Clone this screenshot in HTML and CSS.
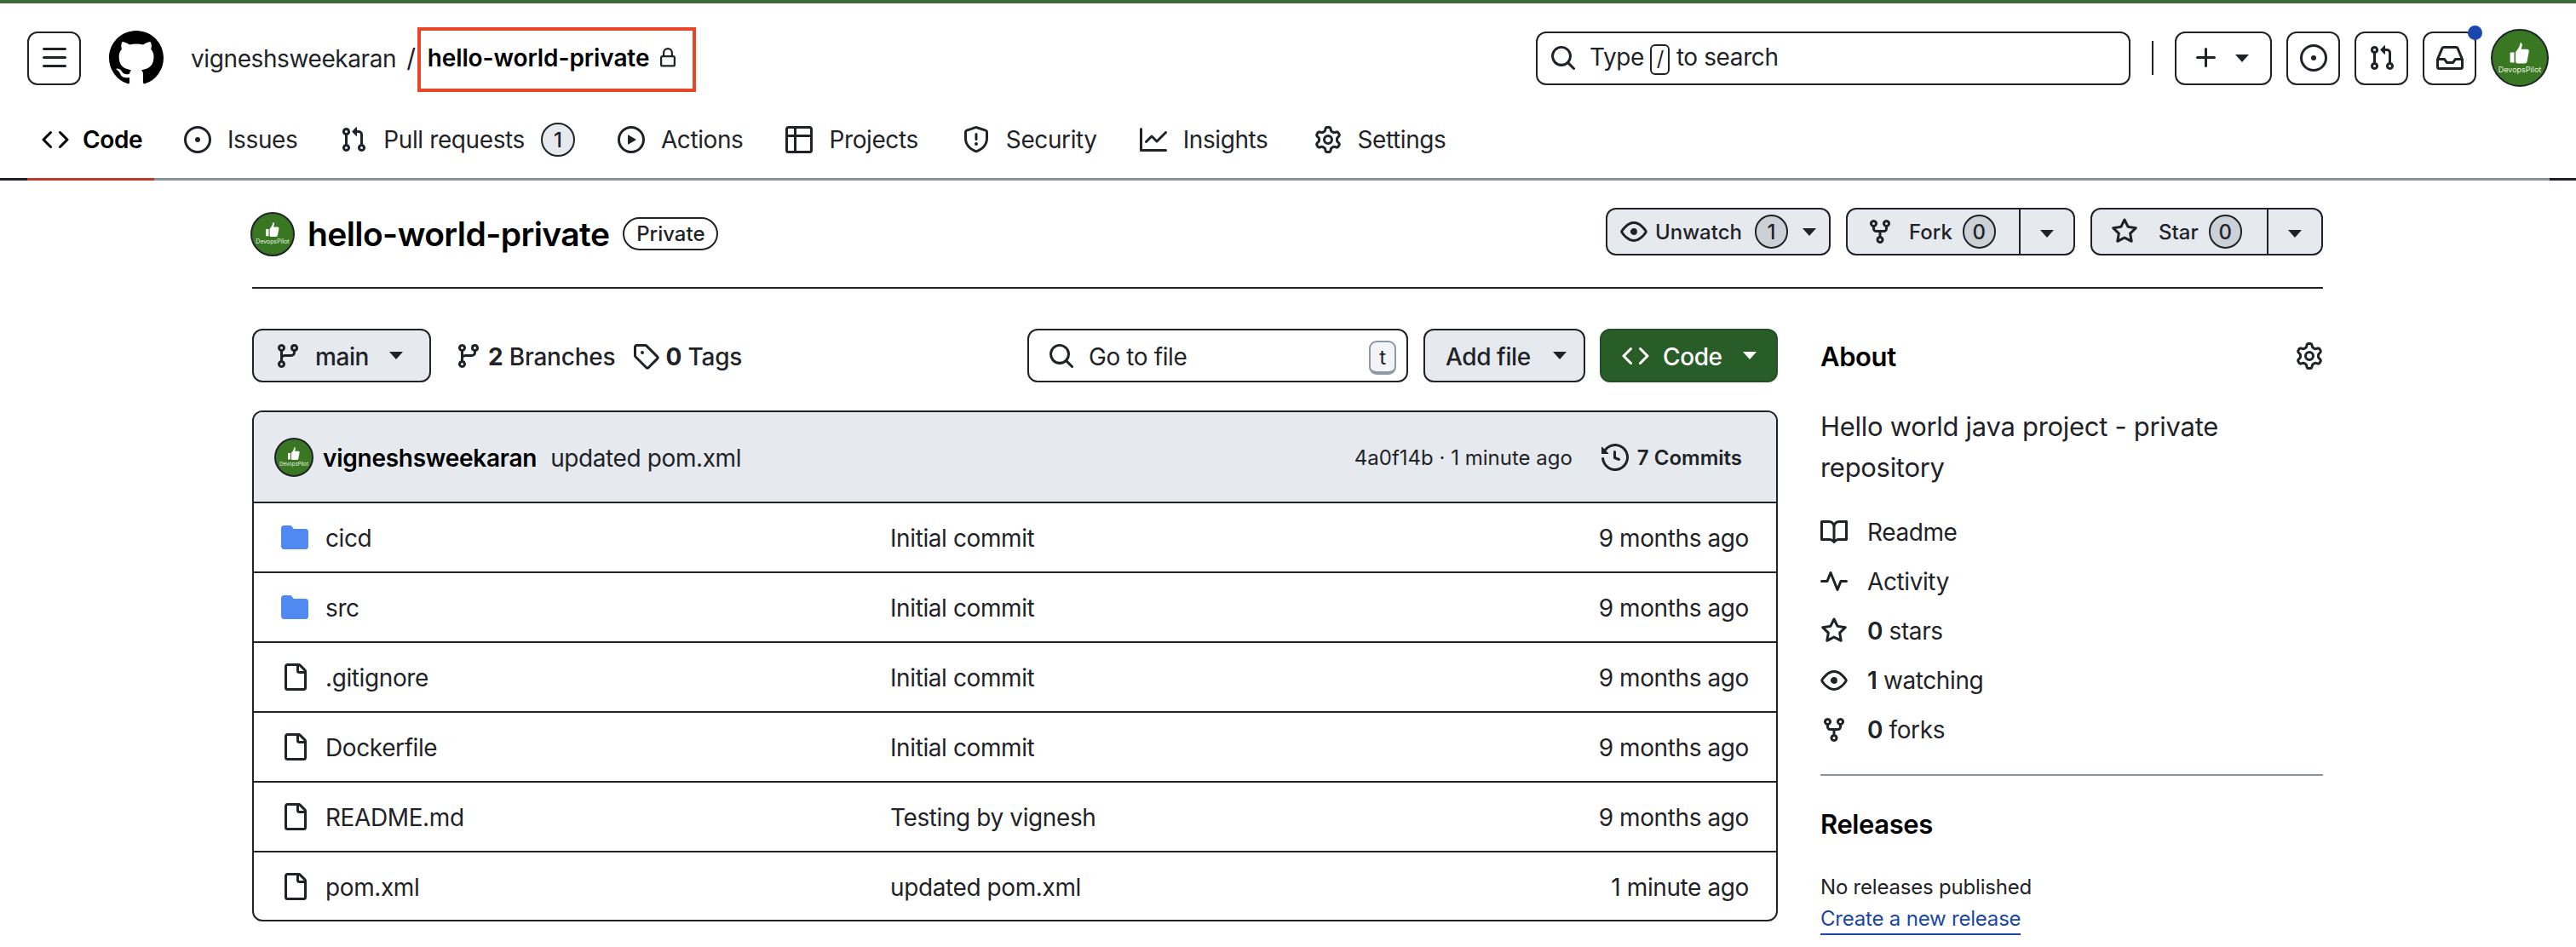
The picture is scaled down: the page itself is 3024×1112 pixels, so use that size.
FILE: index.html
```html
<!DOCTYPE html>
<html lang="en">
<head>
<meta charset="utf-8">
<title>hello-world-private</title>
<link rel="stylesheet" href="styles.css">
</head>
<body>
<svg class="sprite" xmlns="http://www.w3.org/2000/svg">
<symbol id="i-bars" viewBox="0 0 16 16"><path d="M1 2.75A.75.75 0 0 1 1.75 2h12.5a.75.75 0 0 1 0 1.5H1.75A.75.75 0 0 1 1 2.75Zm0 5A.75.75 0 0 1 1.75 7h12.5a.75.75 0 0 1 0 1.5H1.75A.75.75 0 0 1 1 7.75ZM1.75 12h12.5a.75.75 0 0 1 0 1.5H1.75a.75.75 0 0 1 0-1.5Z"/></symbol>
<symbol id="i-github" viewBox="0 0 16 16"><path d="M8 0c4.42 0 8 3.58 8 8a8.013 8.013 0 0 1-5.45 7.59c-.4.08-.55-.17-.55-.38 0-.27.01-1.13.01-2.2 0-.75-.25-1.23-.54-1.48 1.78-.2 3.65-.88 3.65-3.95 0-.88-.31-1.59-.82-2.15.08-.2.36-1.02-.08-2.12 0 0-.67-.22-2.2.82-.64-.18-1.32-.27-2-.27-.68 0-1.36.09-2 .27-1.53-1.03-2.2-.82-2.2-.82-.44 1.1-.16 1.92-.08 2.12-.51.56-.82 1.28-.82 2.15 0 3.06 1.86 3.75 3.64 3.95-.23.2-.44.55-.51 1.07-.46.21-1.61.55-2.33-.66-.15-.24-.6-.83-1.23-.82-.67.01-.27.38.01.53.34.19.73.9.82 1.13.16.45.68 1.31 2.69.94 0 .67.01 1.3.01 1.49 0 .21-.15.45-.55.38A7.995 7.995 0 0 1 0 8c0-4.42 3.58-8 8-8Z"/></symbol>
<symbol id="i-lock" viewBox="0 0 16 16"><path d="M4 4a4 4 0 0 1 8 0v2h.25c.966 0 1.75.784 1.75 1.75v5.5A1.75 1.75 0 0 1 12.25 15h-8.5A1.75 1.75 0 0 1 2 13.25v-5.5C2 6.784 2.784 6 3.75 6H4Zm8.25 3.5h-8.5a.25.25 0 0 0-.25.25v5.5c0 .138.112.25.25.25h8.5a.25.25 0 0 0 .25-.25v-5.5a.25.25 0 0 0-.25-.25ZM10.5 6V4a2.5 2.5 0 1 0-5 0v2Z"/></symbol>
<symbol id="i-code" viewBox="0 0 16 16"><path d="m11.28 3.22 4.25 4.25a.75.75 0 0 1 0 1.06l-4.25 4.25a.749.749 0 0 1-1.275-.326.749.749 0 0 1 .215-.734L13.94 8l-3.72-3.72a.749.749 0 0 1 .326-1.275.749.749 0 0 1 .734.215Zm-6.56 0a.751.751 0 0 1 1.042.018.751.751 0 0 1 .018 1.042L2.06 8l3.72 3.72a.749.749 0 0 1-.326 1.275.749.749 0 0 1-.734-.215L.47 8.53a.75.75 0 0 1 0-1.06Z"/></symbol>
<symbol id="i-issue" viewBox="0 0 16 16"><path d="M8 9.5a1.5 1.5 0 1 0 0-3 1.5 1.5 0 0 0 0 3Z"/><path d="M8 0a8 8 0 1 1 0 16A8 8 0 0 1 8 0ZM1.5 8a6.5 6.5 0 1 0 13 0 6.5 6.5 0 0 0-13 0Z"/></symbol>
<symbol id="i-pr" viewBox="0 0 16 16"><path d="M1.5 3.25a2.25 2.25 0 1 1 3 2.122v5.256a2.251 2.251 0 1 1-1.5 0V5.372A2.25 2.25 0 0 1 1.5 3.25Zm5.677-.177L9.573.677A.25.25 0 0 1 10 .854V2.5h1A2.5 2.5 0 0 1 13.5 5v5.628a2.251 2.251 0 1 1-1.5 0V5a1 1 0 0 0-1-1h-1v1.646a.25.25 0 0 1-.427.177L7.177 3.427a.25.25 0 0 1 0-.354ZM3.75 2.5a.75.75 0 1 0 0 1.5.75.75 0 0 0 0-1.5Zm0 9.5a.75.75 0 1 0 0 1.5.75.75 0 0 0 0-1.5Zm8.25.75a.75.75 0 1 0 1.5 0 .75.75 0 0 0-1.5 0Z"/></symbol>
<symbol id="i-play" viewBox="0 0 16 16"><path d="M8 0a8 8 0 1 1 0 16A8 8 0 0 1 8 0ZM1.5 8a6.5 6.5 0 1 0 13 0 6.5 6.5 0 0 0-13 0Zm4.879-2.773 4.264 2.559a.25.25 0 0 1 0 .428l-4.264 2.559A.25.25 0 0 1 6 10.559V5.442a.25.25 0 0 1 .379-.215Z"/></symbol>
<symbol id="i-table" viewBox="0 0 16 16"><path d="M0 1.75C0 .784.784 0 1.75 0h12.5C15.216 0 16 .784 16 1.75v12.5A1.75 1.75 0 0 1 14.25 16H1.75A1.75 1.75 0 0 1 0 14.25ZM6.5 6.5v8h7.75a.25.25 0 0 0 .25-.25V6.5Zm8-1.5V1.75a.25.25 0 0 0-.25-.25H6.5V5Zm-13 1.5v7.75c0 .138.112.25.25.25H5v-8ZM5 5V1.5H1.75a.25.25 0 0 0-.25.25V5Z"/></symbol>
<symbol id="i-shield" viewBox="0 0 16 16"><path d="M7.467.133a1.748 1.748 0 0 1 1.066 0l5.25 1.68A1.75 1.75 0 0 1 15 3.48V7c0 1.566-.32 3.182-1.303 4.682-.983 1.498-2.585 2.813-5.032 3.855a1.697 1.697 0 0 1-1.33 0c-2.447-1.042-4.049-2.357-5.032-3.855C1.32 10.182 1 8.566 1 7V3.48a1.75 1.75 0 0 1 1.217-1.667Zm.61 1.429a.25.25 0 0 0-.153 0l-5.25 1.68a.25.25 0 0 0-.174.238V7c0 1.358.275 2.666 1.057 3.86.784 1.194 2.121 2.34 4.366 3.297a.196.196 0 0 0 .154 0c2.245-.956 3.582-2.104 4.366-3.298C13.225 9.666 13.5 8.36 13.5 7V3.48a.251.251 0 0 0-.174-.237l-5.25-1.68ZM8.75 4.75v3a.75.75 0 0 1-1.5 0v-3a.75.75 0 0 1 1.5 0ZM9 10.5a1 1 0 1 1-2 0 1 1 0 0 1 2 0Z"/></symbol>
<symbol id="i-graph" viewBox="0 0 16 16"><path d="M1.5 1.75V13.5h13.75a.75.75 0 0 1 0 1.5H.75a.75.75 0 0 1-.75-.75V1.75a.75.75 0 0 1 1.5 0Zm14.28 2.53-5.25 5.25a.75.75 0 0 1-1.06 0L7 7.06 4.28 9.78a.751.751 0 0 1-1.042-.018.751.751 0 0 1-.018-1.042l3.25-3.25a.75.75 0 0 1 1.06 0L10 7.94l4.72-4.72a.751.751 0 0 1 1.042.018.751.751 0 0 1 .018 1.042Z"/></symbol>
<symbol id="i-gear" viewBox="0 0 16 16"><path d="M8 0a8.2 8.2 0 0 1 .701.031C9.444.095 9.99.645 10.16 1.29l.288 1.107c.018.066.079.158.212.224.231.114.454.243.668.386.123.082.233.09.299.071l1.103-.303c.644-.176 1.392.021 1.82.63.27.385.506.792.704 1.218.315.675.111 1.422-.364 1.891l-.814.806c-.049.048-.098.147-.088.294.016.257.016.515 0 .772-.01.147.038.246.088.294l.814.806c.475.469.679 1.216.364 1.891a7.977 7.977 0 0 1-.704 1.217c-.428.61-1.176.807-1.82.63l-1.102-.302c-.067-.019-.177-.011-.3.071a5.909 5.909 0 0 1-.668.386c-.133.066-.194.158-.211.224l-.29 1.106c-.168.646-.715 1.196-1.458 1.26a8.006 8.006 0 0 1-1.402 0c-.743-.064-1.289-.614-1.458-1.26l-.289-1.106c-.018-.066-.079-.158-.212-.224a5.738 5.738 0 0 1-.668-.386c-.123-.082-.233-.09-.299-.071l-1.103.303c-.644.176-1.392-.021-1.82-.63a8.12 8.12 0 0 1-.704-1.218c-.315-.675-.111-1.422.363-1.891l.815-.806c.05-.048.098-.147.088-.294a6.214 6.214 0 0 1 0-.772c.01-.147-.038-.246-.088-.294l-.815-.806C.635 6.045.431 5.298.746 4.623a7.92 7.92 0 0 1 .704-1.217c.428-.61 1.176-.807 1.82-.63l1.102.302c.067.019.177.011.3-.071.214-.143.437-.272.668-.386.133-.066.194-.158.211-.224l.29-1.106C6.009.645 6.556.095 7.299.03 7.53.01 7.764 0 8 0Zm-.571 1.525c-.036.003-.108.036-.137.146l-.289 1.105c-.147.561-.549.967-.998 1.189-.173.086-.34.183-.5.29-.417.278-.97.423-1.529.27l-1.103-.303c-.109-.03-.175.016-.195.045-.22.312-.412.644-.573.99-.014.031-.021.11.059.19l.815.806c.411.406.562.957.53 1.456a4.709 4.709 0 0 0 0 .582c.032.499-.119 1.05-.53 1.456l-.815.806c-.081.08-.073.159-.059.19.162.346.353.677.573.989.02.03.085.076.195.046l1.102-.303c.56-.153 1.113-.008 1.53.27.161.107.328.204.501.29.447.222.85.629.997 1.189l.289 1.105c.029.109.101.143.137.146a6.6 6.6 0 0 0 1.142 0c.036-.003.108-.036.137-.146l.289-1.105c.147-.561.549-.967.998-1.189.173-.086.34-.183.5-.29.417-.278.97-.423 1.529-.27l1.103.303c.109.029.175-.016.195-.045.22-.313.411-.644.573-.99.014-.031.021-.11-.059-.19l-.815-.806c-.411-.406-.562-.957-.53-1.456a4.709 4.709 0 0 0 0-.582c-.032-.499.119-1.05.53-1.456l.815-.806c.081-.08.073-.159.059-.19a6.464 6.464 0 0 0-.573-.989c-.02-.03-.085-.076-.195-.046l-1.102.303c-.56.153-1.113.008-1.53-.27a4.44 4.44 0 0 0-.501-.29c-.447-.222-.85-.629-.997-1.189l-.289-1.105c-.029-.11-.101-.143-.137-.146a6.6 6.6 0 0 0-1.142 0ZM11 8a3 3 0 1 1-6 0 3 3 0 0 1 6 0ZM9.5 8a1.5 1.5 0 1 0-3.001.001A1.5 1.5 0 0 0 9.5 8Z"/></symbol>
<symbol id="i-search" viewBox="0 0 16 16"><path d="M10.68 11.74a6 6 0 0 1-7.922-8.982 6 6 0 0 1 8.982 7.922l3.04 3.04a.749.749 0 0 1-.326 1.275.749.749 0 0 1-.734-.215ZM11.5 7a4.499 4.499 0 1 0-8.997 0A4.499 4.499 0 0 0 11.5 7Z"/></symbol>
<symbol id="i-plus" viewBox="0 0 16 16"><path d="M7.75 2a.75.75 0 0 1 .75.75V7h4.25a.75.75 0 0 1 0 1.5H8.5v4.25a.75.75 0 0 1-1.5 0V8.5H2.75a.75.75 0 0 1 0-1.5H7V2.75A.75.75 0 0 1 7.75 2Z"/></symbol>
<symbol id="i-inbox" viewBox="0 0 16 16"><path d="M2.8 2.06A1.75 1.75 0 0 1 4.41 1h7.18c.7 0 1.333.417 1.61 1.06l2.74 6.395c.04.093.06.194.06.295v4.5A1.75 1.75 0 0 1 14.25 15H1.75A1.75 1.75 0 0 1 0 13.25v-4.5c0-.101.02-.202.06-.295Zm1.61.44a.25.25 0 0 0-.23.152L1.887 8H4.75a.75.75 0 0 1 .6.3L6.625 10h2.75l1.275-1.7a.75.75 0 0 1 .6-.3h2.863L11.82 2.652a.25.25 0 0 0-.23-.152Zm10.09 7h-2.875l-1.275 1.7a.75.75 0 0 1-.6.3h-3.5a.75.75 0 0 1-.6-.3L4.375 9.5H1.5v3.75c0 .138.112.25.25.25h12.5a.25.25 0 0 0 .25-.25Z"/></symbol>
<symbol id="i-eye" viewBox="0 0 16 16"><path d="M8 2c1.981 0 3.671.992 4.933 2.078 1.27 1.091 2.187 2.345 2.637 3.023a1.62 1.62 0 0 1 0 1.798c-.45.678-1.367 1.932-2.637 3.023C11.67 13.008 9.981 14 8 14c-1.981 0-3.671-.992-4.933-2.078C1.797 10.83.88 9.576.43 8.898a1.62 1.62 0 0 1 0-1.798c.45-.677 1.367-1.931 2.637-3.022C4.33 2.992 6.019 2 8 2ZM1.679 7.932a.12.12 0 0 0 0 .136c.411.622 1.241 1.75 2.366 2.717C5.176 11.758 6.527 12.5 8 12.5c1.473 0 2.825-.742 3.955-1.715 1.124-.967 1.954-2.096 2.366-2.717a.12.12 0 0 0 0-.136c-.412-.621-1.242-1.75-2.366-2.717C10.824 4.242 9.473 3.5 8 3.5c-1.473 0-2.825.742-3.955 1.715-1.124.967-1.954 2.096-2.366 2.717ZM8 10a2 2 0 1 1-.001-3.999A2 2 0 0 1 8 10Z"/></symbol>
<symbol id="i-fork" viewBox="0 0 16 16"><path d="M5 5.372v.878c0 .414.336.75.75.75h4.5a.75.75 0 0 0 .75-.75v-.878a2.25 2.25 0 1 1 1.5 0v.878a2.25 2.25 0 0 1-2.25 2.25h-1.5v2.128a2.251 2.251 0 1 1-1.5 0V8.5h-1.5A2.25 2.25 0 0 1 3.5 6.25v-.878a2.25 2.25 0 1 1 1.5 0ZM5 3.25a.75.75 0 1 0-1.5 0 .75.75 0 0 0 1.5 0Zm6.75.75a.75.75 0 1 0 0-1.5.75.75 0 0 0 0 1.5Zm-3 8.75a.75.75 0 1 0-1.5 0 .75.75 0 0 0 1.5 0Z"/></symbol>
<symbol id="i-star" viewBox="0 0 16 16"><path d="M8 .25a.75.75 0 0 1 .673.418l1.882 3.815 4.21.612a.75.75 0 0 1 .416 1.279l-3.046 2.97.719 4.192a.751.751 0 0 1-1.088.791L8 12.347l-3.766 1.98a.75.75 0 0 1-1.088-.79l.72-4.194L.818 6.374a.75.75 0 0 1 .416-1.28l4.21-.611L7.327.668A.75.75 0 0 1 8 .25Zm0 2.445L6.615 5.5a.75.75 0 0 1-.564.41l-3.097.45 2.24 2.184a.75.75 0 0 1 .216.664l-.528 3.084 2.769-1.456a.75.75 0 0 1 .698 0l2.77 1.456-.53-3.084a.75.75 0 0 1 .216-.664l2.24-2.183-3.096-.45a.75.75 0 0 1-.564-.41L8 2.694Z"/></symbol>
<symbol id="i-branch" viewBox="0 0 16 16"><path d="M9.5 3.25a2.25 2.25 0 1 1 3 2.122V6A2.5 2.5 0 0 1 10 8.5H6a1 1 0 0 0-1 1v1.128a2.251 2.251 0 1 1-1.5 0V5.372a2.25 2.25 0 1 1 1.5 0v1.836A2.493 2.493 0 0 1 6 7h4a1 1 0 0 0 1-1v-.628A2.25 2.25 0 0 1 9.5 3.25Zm-6 0a.75.75 0 1 0 1.5 0 .75.75 0 0 0-1.5 0Zm8.25-.75a.75.75 0 1 0 0 1.5.75.75 0 0 0 0-1.5ZM4.25 12a.75.75 0 1 0 0 1.5.75.75 0 0 0 0-1.5Z"/></symbol>
<symbol id="i-tag" viewBox="0 0 16 16"><path d="M1 7.775V2.75C1 1.784 1.784 1 2.75 1h5.025c.464 0 .91.184 1.238.513l6.25 6.25a1.75 1.75 0 0 1 0 2.474l-5.026 5.026a1.75 1.75 0 0 1-2.474 0l-6.25-6.25A1.752 1.752 0 0 1 1 7.775Zm1.5 0c0 .066.026.13.073.177l6.25 6.25a.25.25 0 0 0 .354 0l5.025-5.025a.25.25 0 0 0 0-.354l-6.25-6.25a.25.25 0 0 0-.177-.073H2.75a.25.25 0 0 0-.25.25ZM6 5a1 1 0 1 1 0 2 1 1 0 0 1 0-2Z"/></symbol>
<symbol id="i-history" viewBox="0 0 16 16"><path d="m.427 1.927 1.215 1.215a8.002 8.002 0 1 1-1.6 5.685.75.75 0 1 1 1.493-.154 6.5 6.5 0 1 0 1.18-4.458l1.358 1.358A.25.25 0 0 1 3.896 6H.25A.25.25 0 0 1 0 5.75V2.104a.25.25 0 0 1 .427-.177ZM7.75 4a.75.75 0 0 1 .75.75v2.992l2.028.812a.75.75 0 0 1-.557 1.392l-2.5-1A.751.751 0 0 1 7 8.25v-3.5A.75.75 0 0 1 7.75 4Z"/></symbol>
<symbol id="i-dir" viewBox="0 0 16 16"><path d="M1.75 1A1.75 1.75 0 0 0 0 2.75v10.5C0 14.216.784 15 1.75 15h12.5A1.75 1.75 0 0 0 16 13.25v-8.5A1.75 1.75 0 0 0 14.25 3H7.5a.25.25 0 0 1-.2-.1l-.9-1.2C6.07 1.26 5.55 1 5 1H1.75Z"/></symbol>
<symbol id="i-file" viewBox="0 0 16 16"><path d="M2 1.75C2 .784 2.784 0 3.75 0h6.586c.464 0 .909.184 1.237.513l2.914 2.914c.329.328.513.773.513 1.237v9.586A1.75 1.75 0 0 1 13.25 16h-9.5A1.75 1.75 0 0 1 2 14.25Zm1.75-.25a.25.25 0 0 0-.25.25v12.5c0 .138.112.25.25.25h9.5a.25.25 0 0 0 .25-.25V6h-2.75A1.75 1.75 0 0 1 9 4.25V1.5Zm6.75.062V4.25c0 .138.112.25.25.25h2.688l-.011-.013-2.914-2.914-.013-.011Z"/></symbol>
<symbol id="i-book" viewBox="0 0 16 16"><path d="M0 1.75A.75.75 0 0 1 .75 1h4.253c1.227 0 2.317.59 3 1.501A3.743 3.743 0 0 1 11.006 1h4.245a.75.75 0 0 1 .75.75v10.5a.75.75 0 0 1-.75.75h-4.507a2.25 2.25 0 0 0-1.591.659l-.622.621a.75.75 0 0 1-1.06 0l-.622-.621A2.25 2.25 0 0 0 5.258 13H.75a.75.75 0 0 1-.75-.75Zm7.251 10.324.004-5.073-.002-2.253A2.25 2.25 0 0 0 5.003 2.5H1.5v9h3.757a3.75 3.75 0 0 1 1.994.574ZM8.755 4.75l-.004 7.322a3.752 3.752 0 0 1 1.992-.572H14.5v-9h-3.495a2.25 2.25 0 0 0-2.25 2.25Z"/></symbol>
<symbol id="i-pulse" viewBox="0 0 16 16"><path d="M6 2c.306 0 .582.187.696.471L10 10.731l1.304-3.26A.751.751 0 0 1 12 7h3.25a.75.75 0 0 1 0 1.5h-2.742l-1.812 4.528a.751.751 0 0 1-1.392 0L6 4.77 4.696 8.03A.75.75 0 0 1 4 8.5H.75a.75.75 0 0 1 0-1.5h2.742l1.812-4.529A.751.751 0 0 1 6 2Z"/></symbol>
<symbol id="i-thumb" viewBox="0 0 16 16"><path d="M8.6 0c.9.2 1.2 1 1.1 2-.1.9-.5 1.900-.7 2.800h4.200c1 0 1.600.8 1.400 1.700l-1.300 7c-.2.900-.8 1.500-1.800 1.500H6.500c-.7 0-1.200-.3-1.500-.8V6.800c1.300-1.500 2.700-3.400 3.100-5.400C8.200.8 8.300.3 8.600 0ZM1.500 7H4v7.500H1.500a.5.5 0 0 1-.5-.5V7.500a.5.5 0 0 1 .5-.5Z"/></symbol>
</svg>

<div class="topline"></div>
<header class="appheader">
  <div class="headtop">
    <button class="ibtn menu"><svg class="ico i32"><use href="#i-bars"/></svg></button>
    <svg class="logo"><use href="#i-github"/></svg>
    <a class="owner">vigneshsweekaran</a>
    <span class="slash">/</span>
    <div class="crumb"><strong class="crumbname">hello-world-private</strong><svg class="ico i24 lock"><use href="#i-lock"/></svg></div>
    <div class="spacer"></div>
    <div class="searchbox"><svg class="ico i32"><use href="#i-search"/></svg><span class="searchtext">Type <kbd class="slashkey">/</kbd> to search</span></div>
    <span class="vsep"></span>
    <button class="ibtn plusbtn"><svg class="ico i32"><use href="#i-plus"/></svg><span class="caret"></span></button>
    <button class="ibtn square"><svg class="ico i32"><use href="#i-issue"/></svg></button>
    <button class="ibtn square"><svg class="ico i32"><use href="#i-pr"/></svg></button>
    <button class="ibtn square inboxbtn"><svg class="ico i32"><use href="#i-inbox"/></svg><span class="dot"></span></button>
    <div class="avatar av68"><svg class="thumb"><use href="#i-thumb"/></svg><span class="avtext">DevopsPilot</span></div>
  </div>
  <nav class="tabs">
    <a class="tab current"><svg class="ico i32"><use href="#i-code"/></svg><span>Code</span></a>
    <a class="tab"><svg class="ico i32"><use href="#i-issue"/></svg><span>Issues</span></a>
    <a class="tab"><svg class="ico i32"><use href="#i-pr"/></svg><span>Pull requests</span><span class="counter navcount">1</span></a>
    <a class="tab"><svg class="ico i32"><use href="#i-play"/></svg><span>Actions</span></a>
    <a class="tab"><svg class="ico i32"><use href="#i-table"/></svg><span>Projects</span></a>
    <a class="tab tabsec"><svg class="ico i32"><use href="#i-shield"/></svg><span>Security</span></a>
    <a class="tab"><svg class="ico i32"><use href="#i-graph"/></svg><span>Insights</span></a>
    <a class="tab tabset"><svg class="ico i32"><use href="#i-gear"/></svg><span>Settings</span></a>
  </nav>
</header>

<main class="page">
  <div class="repohead">
    <div class="avatar av52"><svg class="thumb"><use href="#i-thumb"/></svg><span class="avtext">DevopsPilot</span></div>
    <h1 class="reponame">hello-world-private</h1>
    <span class="label">Private</span>
    <div class="spacer"></div>
    <div class="btn sbtn watch"><svg class="ico i32"><use href="#i-eye"/></svg><span>Unwatch</span><span class="counter">1</span><span class="caret"></span></div>
    <div class="btn sbtn fork"><span class="splitmain"><svg class="ico i32"><use href="#i-fork"/></svg><span class="lab">Fork</span><span class="counter">0</span></span><span class="splitcaret"><span class="caret"></span></span></div>
    <div class="btn sbtn star"><span class="splitmain"><svg class="ico i32"><use href="#i-star"/></svg><span class="lab">Star</span><span class="counter">0</span></span><span class="splitcaret"><span class="caret"></span></span></div>
  </div>

  <div class="columns">
    <section class="maincol">
      <div class="toolbar">
        <div class="btn branchbtn"><svg class="ico i32"><use href="#i-branch"/></svg><span class="brname">main</span><span class="caret"></span></div>
        <a class="stat statbranch"><svg class="ico i32"><use href="#i-branch"/></svg><span class="txt"><b>2</b> Branches</span></a>
        <a class="stat stattag"><svg class="ico i32"><use href="#i-tag"/></svg><span class="txt"><b>0</b> Tags</span></a>
        <div class="spacer"></div>
        <div class="gotofile"><svg class="ico i32"><use href="#i-search"/></svg><span class="gtext">Go to file</span><kbd class="tkey">t</kbd></div>
        <div class="btn addfile"><span class="txt">Add file</span><span class="caret"></span></div>
        <div class="btn codebtn"><svg class="ico i32"><use href="#i-code"/></svg><span class="txt">Code</span><span class="caret"></span></div>
      </div>

      <div class="filebox">
        <div class="commitrow">
          <div class="avatar av44"><svg class="thumb"><use href="#i-thumb"/></svg><span class="avtext">DevopsPilot</span></div>
          <strong class="cauthor">vigneshsweekaran</strong>
          <span class="cmsg">updated pom.xml</span>
          <div class="spacer"></div>
          <span class="chash">4a0f14b · 1 minute ago</span>
          <a class="ccount"><svg class="ico i32"><use href="#i-history"/></svg><span class="txt">7 Commits</span></a>
        </div>
        <div class="row"><svg class="ico i32 dir"><use href="#i-dir"/></svg><span class="fname">cicd</span><span class="fmsg">Initial commit</span><span class="ftime">9 months ago</span></div>
        <div class="row"><svg class="ico i32 dir"><use href="#i-dir"/></svg><span class="fname">src</span><span class="fmsg">Initial commit</span><span class="ftime">9 months ago</span></div>
        <div class="row"><svg class="ico i32"><use href="#i-file"/></svg><span class="fname">.gitignore</span><span class="fmsg">Initial commit</span><span class="ftime">9 months ago</span></div>
        <div class="row"><svg class="ico i32"><use href="#i-file"/></svg><span class="fname">Dockerfile</span><span class="fmsg">Initial commit</span><span class="ftime">9 months ago</span></div>
        <div class="row"><svg class="ico i32"><use href="#i-file"/></svg><span class="fname">README.md</span><span class="fmsg">Testing by vignesh</span><span class="ftime">9 months ago</span></div>
        <div class="row"><svg class="ico i32"><use href="#i-file"/></svg><span class="fname">pom.xml</span><span class="fmsg">updated pom.xml</span><span class="ftime">1 minute ago</span></div>
      </div>
    </section>

    <aside class="side">
      <div class="abouthead"><h2 class="sidetitle">About</h2><svg class="ico i32"><use href="#i-gear"/></svg></div>
      <p class="desc">Hello world java project - private repository</p>
      <ul class="facts">
        <li><svg class="ico i32"><use href="#i-book"/></svg><span>Readme</span></li>
        <li><svg class="ico i32"><use href="#i-pulse"/></svg><span>Activity</span></li>
        <li><svg class="ico i32"><use href="#i-star"/></svg><span><b>0</b> stars</span></li>
        <li><svg class="ico i32"><use href="#i-eye"/></svg><span><b>1</b> watching</span></li>
        <li><svg class="ico i32"><use href="#i-fork"/></svg><span><b>0</b> forks</span></li>
      </ul>
      <hr class="siderule">
      <h2 class="sidetitle">Releases</h2>
      <p class="norel">No releases published</p>
      <a class="newrel">Create a new release</a>
    </aside>
  </div>
</main>
</body>
</html>
```
FILE: styles.css
```css
* { box-sizing: border-box; }
html, body { margin: 0; height: 1112px; overflow: hidden; background: #fff; }
body { font-family: Inter, "Liberation Sans", sans-serif; font-size: 28px; letter-spacing: -0.4px; color: #1f2328; }
.sprite { display: none; }
.ico { fill: currentColor; flex: none; display: block; }
.i24 { width: 24px; height: 24px; }
.i32 { width: 32px; height: 32px; }
.spacer { flex: 1; }
.txt, .owner, .searchtext, .brname, .gtext, .cauthor, .cmsg, .chash, .fname, .fmsg, .ftime { padding-top: 2px; }

.topline { height: 4px; background: #3c6a3a; }

.appheader { height: 205px; background: #fff; display: flex; flex-direction: column; }
.headtop { display: flex; align-items: center; height: 128px; padding: 0 32px; position: relative; }
.ibtn { height: 63px; border: 2.5px solid #1f2328; border-radius: 12px; background: #fff; color: #1f2328; display: flex; align-items: center; justify-content: center; padding: 0; }
.menu { width: 63px; }
.logo { width: 64px; height: 64px; margin-left: 33px; fill: #000; flex: none; }
.owner { margin-left: 32px; color: #1f2328; }
.slash { margin-left: 12px; color: #1f2328; font-size: 30px; }
.crumb { display: flex; align-items: center; height: 76px; width: 327px; margin: 4px 0 0 2px; padding: 0 0 4px 8px; border: 4px solid #ea4529; }
.crumbname { font-weight: 600; color: #000; letter-spacing: -0.1px; }
.lock { margin-left: 10px; }
.searchbox { width: 698px; height: 63px; border: 2.5px solid #1f2328; border-radius: 12px; display: flex; align-items: center; padding-left: 14px; gap: 15px; }
.searchtext { white-space: nowrap; }
.slashkey { display: inline-block; font-family: inherit; font-size: 24px; line-height: 30px; width: 23px; height: 36px; text-align: center; border: 2px solid #1f2328; border-radius: 6px; vertical-align: middle; }
.vsep { width: 2px; height: 40px; background: #1f2328; margin: 0 25px; }
.plusbtn { width: 114px; gap: 18px; padding-right: 6px; }
.square { width: 63px; margin-left: 17px; }
.inboxbtn { position: relative; }
.dot { position: absolute; top: -9px; right: -9px; width: 17px; height: 17px; border-radius: 50%; background: #1a46b0; }
.caret { width: 0; height: 0; border-left: 8px solid transparent; border-right: 8px solid transparent; border-top: 9px solid currentColor; flex: none; display: block; }

.avatar { border-radius: 50%; background: #3a7723; border: 2px solid #1f2328; display: flex; flex-direction: column; align-items: center; justify-content: center; color: #fff; flex: none; overflow: hidden; letter-spacing: 0; }
.av68 { width: 68px; height: 68px; margin-left: 17px; }
.av52 { width: 52px; height: 52px; margin-left: -2px; }
.av44 { width: 46px; height: 46px; }
.thumb { fill: #fff; display: block; }
.av68 .thumb { width: 26px; height: 26px; }
.av52 .thumb { width: 18px; height: 18px; }
.av44 .thumb { width: 16px; height: 16px; }
.avtext { font-size: 9px; line-height: 11px; white-space: nowrap; color: #e8f3e0; }
.av52 .avtext { font-size: 7px; line-height: 9px; }
.av44 .avtext { font-size: 6px; line-height: 8px; }

.tabs { display: flex; flex: 1; padding-left: 33px; gap: 18px; align-items: flex-start; }
.tab { display: flex; align-items: center; gap: 19px; padding: 0 16px; height: 64px; color: #1f2328; }
.tab.current { font-weight: 600; color: #000; width: 149px; gap: 16px; }
.tabsec { margin-left: 2px; }
.tabset { margin-left: 4px; }

.counter { display: inline-flex; align-items: center; justify-content: center; min-width: 40px; height: 40px; padding: 0 8px; border: 2px solid #1f2328; border-radius: 20px; background: #e6eaef; font-size: 24px; font-weight: 500; letter-spacing: 0; }
.sbtn .counter { background: #ccd1d7; min-width: 39px; height: 40px; }

.page { padding: 0 297px 0 296px; border-top: 3px solid; border-image: linear-gradient(to right, #1f2328 33px, #c0392b 33px, #c0392b 182px, #8a929c 182px, #8a929c 2992px, #1f2328 2992px) 1; }
.repohead { display: flex; align-items: center; height: 127px; border-bottom: 2.5px solid #1f2328; }
.reponame { margin: 0 0 0 15px; font-size: 39px; font-weight: 600; color: #000; letter-spacing: -0.6px; }
.label { margin-left: 16px; height: 39px; width: 112px; border: 2px solid #1f2328; border-radius: 20px; display: flex; align-items: center; justify-content: center; font-size: 24px; font-weight: 500; letter-spacing: 0; }

.btn { display: flex; align-items: center; border: 2.5px solid #1f2328; border-radius: 12px; background: #e6eaef; font-weight: 500; flex: none; }
.sbtn { height: 56px; font-size: 24px; margin-bottom: 5px; letter-spacing: 0; }
.watch { width: 264px; padding-left: 15px; gap: 9px; }
.watch .counter { margin-left: 6px; }
.watch .caret { margin-left: 8px; }
.fork { width: 269px; margin-left: 18px; }
.star { width: 273px; margin-left: 18px; }
.splitmain { display: flex; align-items: center; height: 100%; border-right: 2px solid #1f2328; padding-left: 22px; }
.fork .splitmain { width: 203px; }
.star .splitmain { width: 207px; }
.lab { margin-left: 18px; }
.star .lab { margin-left: 24px; }
.splitmain .counter { margin-left: 12px; }
.splitcaret { flex: 1; display: flex; justify-content: center; padding-top: 4px; }

.columns { display: grid; grid-template-columns: 1791px 590px; column-gap: 50px; }
.toolbar { display: flex; align-items: center; height: 63px; margin-top: 47px; }
.branchbtn { width: 210px; height: 63px; padding-left: 24px; }
.brname { margin-left: 16px; }
.branchbtn .caret { margin-left: 24px; }
.stat { display: flex; align-items: center; color: #1f2328; font-weight: 500; letter-spacing: -0.2px; }
.stat b { font-weight: 700; }
.statbranch { margin-left: 28px; gap: 7px; }
.stattag { margin-left: 20px; gap: 7px; }
.gotofile { width: 447px; height: 63px; border: 2.5px solid #1f2328; border-radius: 12px; display: flex; align-items: center; padding-left: 22px; position: relative; }
.gtext { margin-left: 16px; }
.tkey { position: absolute; right: 12px; top: 12px; width: 32px; height: 40px; display: flex; align-items: center; justify-content: center; font-family: inherit; font-size: 24px; background: #f2f4f7; border: 2px solid #8f98a3; border-bottom-width: 4px; border-radius: 9px; }
.addfile { width: 190px; height: 63px; margin-left: 18px; padding-left: 24px; }
.addfile .caret { margin-left: 26px; }
.codebtn { width: 209px; height: 63px; margin-left: 17px; padding-left: 24px; background: #295d27; border-color: #244f24; color: #fff; }
.codebtn .txt { margin-left: 16px; }
.codebtn .caret { margin-left: 24px; }

.filebox { margin-top: 33px; border: 2.5px solid #1f2328; border-radius: 12px; overflow: hidden; }
.commitrow { display: flex; align-items: center; height: 105px; padding: 0 40px 0 24px; background: #e6eaef; }
.cauthor { margin-left: 11px; font-weight: 600; color: #000; letter-spacing: -0.25px; }
.cmsg { margin-left: 16px; }
.chash { font-size: 24px; letter-spacing: 0; }
.ccount { display: flex; align-items: center; gap: 10px; margin-left: 34px; font-size: 24px; font-weight: 600; letter-spacing: 0; }
.row { display: grid; grid-template-columns: 32px 683px 1fr auto; align-items: center; height: 82px; padding: 0 32px; border-top: 2.5px solid #1f2328; }
.row:last-child { height: 81px; }
.fname { margin-left: 20px; }
.dir { fill: #5089f0; }
.ftime { text-align: right; }

.abouthead { display: flex; justify-content: space-between; align-items: center; height: 63px; margin-top: 47px; }
.abouthead .sidetitle { padding-top: 2px; }
.sidetitle { margin: 0; font-size: 31px; font-weight: 600; color: #000; }
.desc { margin: 28px 0 0; font-size: 31px; letter-spacing: -0.3px; line-height: 48px; width: 560px; color: #1f2328; }
.facts { list-style: none; margin: 23px 0 0; padding: 0; }
.facts li { display: flex; align-items: center; height: 58px; gap: 23px; }
.facts b { font-weight: 600; }
.siderule { border: 0; height: 2px; background: #8a929c; margin: 23px 0 38px; }
.norel { margin: 38px 0 0; font-size: 24px; line-height: 36px; letter-spacing: -0.2px; }
.newrel { display: inline-block; font-size: 24px; line-height: 34px; letter-spacing: -0.2px; color: #1a46a8; border-bottom: 2px solid #1a46a8; }
```
